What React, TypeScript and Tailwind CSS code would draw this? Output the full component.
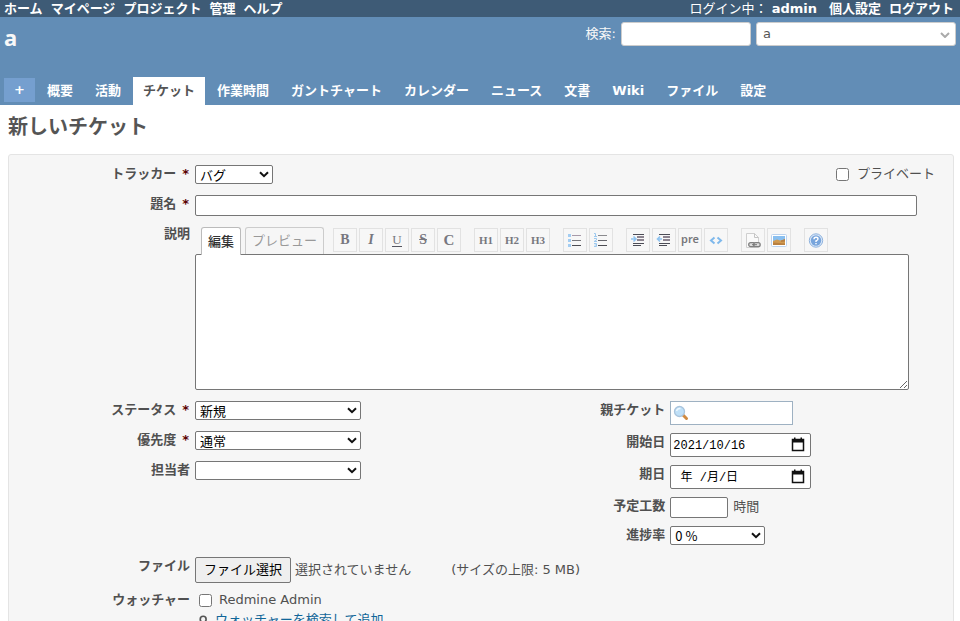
import { useRef } from "react";
import type { ReactNode } from "react";

const TOP_LINKS = ["ホーム", "マイページ", "プロジェクト", "管理", "ヘルプ"];
const TABS = ["概要", "活動", "チケット", "作業時間", "ガントチャート", "カレンダー", "ニュース", "文書", "Wiki", "ファイル", "設定"];

const INPUT = "rounded-[2px] border border-[#767676] bg-white px-[2px] text-[13px] text-black";

function Label({ htmlFor, required, children }: { htmlFor: string; required?: boolean; children: ReactNode }) {
  return (
    <label htmlFor={htmlFor} className="w-[175px] shrink-0 text-right font-bold leading-[18px]">
      {children}
      {required && <span className="ml-[6px] mr-px text-[#5a0000]">*</span>}
    </label>
  );
}

function Row({ id, label, required, children }: { id: string; label: string; required?: boolean; children: ReactNode }) {
  return (
    <div className="flex items-start gap-[5px]">
      <Label htmlFor={id} required={required}>{label}</Label>
      {children}
    </div>
  );
}

function Select({ id, width, options }: { id: string; width: string; options: string[] }) {
  return (
    <div className={`relative ${width}`}>
      <select
        id={id}
        className="block h-[19px] w-full appearance-none rounded-[2px] border border-[#767676] bg-white pl-1 text-[13px] leading-[17px] text-black font-['Noto_Sans_CJK_JP',sans-serif]"
      >
        {options.map((o) => <option key={o}>{o}</option>)}
      </select>
      <svg viewBox="0 0 10 7" className="pointer-events-none absolute right-1 top-[6px] h-[7px] w-[10px]" fill="none" aria-hidden="true">
        <path d="M1 1.200l4 4l4-4" stroke="#111" strokeWidth="2" />
      </svg>
    </div>
  );
}

function Glyph({ children, className = "" }: { children: ReactNode; className?: string }) {
  return <span className={`font-['Liberation_Serif',serif] font-bold text-[#77777f] ${className}`}>{children}</span>;
}

function Svg({ children }: { children: ReactNode }) {
  return <svg viewBox="0 0 16 16" className="size-4" fill="none" aria-hidden="true">{children}</svg>;
}

const H = "text-[11px]";
const GROUPS: { name: string; icon: ReactNode }[][] = [
  [
    { name: "太字", icon: <Glyph className="text-[14px]">B</Glyph> },
    { name: "斜体", icon: <Glyph className="text-[14px] italic">I</Glyph> },
    { name: "下線", icon: <Glyph className="border-b border-[#55555f] text-[13px] font-normal leading-[13px]">U</Glyph> },
    { name: "取り消し線", icon: <Glyph className="text-[14px] line-through">S</Glyph> },
    { name: "コード", icon: <Glyph className="text-[15px]">C</Glyph> },
  ],
  [
    { name: "見出し1", icon: <Glyph className={H}>H1</Glyph> },
    { name: "見出し2", icon: <Glyph className={H}>H2</Glyph> },
    { name: "見出し3", icon: <Glyph className={H}>H3</Glyph> },
  ],
  [
    {
      name: "箇条書き",
      icon: (
        <Svg>
          <path d="M1 2h3v3H1zM1 7h3v3H1zM1 12h3v3H1z" fill="#a3cdf2" />
          <path d="M5 3.500h9" stroke="#a79aa9" />
          <path d="M5 8.500h9" stroke="#77777c" />
          <path d="M5 13.500h9" stroke="#4c4c52" />
        </Svg>
      ),
    },
    {
      name: "番号付きリスト",
      icon: (
        <Svg>
          <path d="M1 1.500h1.500v3M1 4.500h3M1 6.500h2.500v1.500L1 9.500h3M1 11.500h2.500v3H1M1.500 13h2" stroke="#9dc9ef" />
          <path d="M5 3.500h9" stroke="#8a8a8e" />
          <path d="M5 8.500h9" stroke="#66666c" />
          <path d="M5 13.500h9" stroke="#4c4c52" />
        </Svg>
      ),
    },
  ],
  [
    {
      name: "引用",
      icon: (
        <Svg>
          <path d="M3 2.500h11M3 11.500h11M3 13.500h8" stroke="#4c4c56" />
          <path d="M7 5h7M7 8h7" stroke="#8c8490" strokeWidth="2" />
          <path d="M1 7h4M3.500 4.500L6 7L3.500 9.500" stroke="#8fc3f0" strokeWidth="1.600" />
        </Svg>
      ),
    },
    {
      name: "引用解除",
      icon: (
        <Svg>
          <path d="M3 2.500h11M3 11.500h11M3 13.500h8" stroke="#4c4c56" />
          <path d="M7 5h7M7 8h7" stroke="#8c8490" strokeWidth="2" />
          <path d="M6 7H2M4 4.500L1.500 7L4 9.500" stroke="#8fc3f0" strokeWidth="1.600" />
        </Svg>
      ),
    },
    { name: "整形済みテキスト", icon: <span className="pb-[3px] font-['Noto_Sans',sans-serif] text-[11px] font-semibold text-[#77777c]">pre</span> },
    {
      name: "コードブロック",
      icon: (
        <Svg>
          <path d="M6.500 5.500L3 8.500l3.500 3M9.500 5.500l3.500 3l-3.500 3" stroke="#7fb9ec" strokeWidth="2" />
        </Svg>
      ),
    },
  ],
  [
    {
      name: "Wikiページへのリンク",
      icon: (
        <Svg>
          <path d="M1.500 1.500h8l4 4v10h-12z" fill="#fafafa" stroke="#cfcfcf" />
          <path d="M9.500 1.500v4h4" stroke="#c4c4c4" />
          <rect x="3.700" y="10.700" width="6.500" height="4" rx="2" fill="#ddd" stroke="#808080" strokeWidth="1.300" />
          <rect x="8.700" y="10.700" width="6.500" height="4" rx="2" fill="#ddd" stroke="#808080" strokeWidth="1.300" />
          <path d="M7 12.700h5" stroke="#777" />
        </Svg>
      ),
    },
    {
      name: "画像",
      icon: (
        <Svg>
          <rect x="0.500" y="2.500" width="15" height="12" rx="1" fill="#fff" stroke="#bcd3ee" />
          <rect x="2" y="4" width="12" height="9" fill="#88bff0" />
          <path d="M2 9l4-1.500 3 1 5-1V13H2z" fill="#d19a50" />
          <path d="M10 8.500l4-1.500V9.500l-4 .5zM2 10.500l12 1V13H2z" fill="#b98040" />
        </Svg>
      ),
    },
  ],
  [
    {
      name: "ヘルプ",
      icon: (
        <Svg>
          <circle cx="8" cy="8.500" r="6.700" fill="#dce9f8" stroke="#8eb2de" />
          <circle cx="8" cy="8.500" r="5.200" fill="#78a5dc" />
          <path d="M6 7.200q0-2 2-2t2 1.700q0 1-2 2v1M8 11v1.300" stroke="#fff" strokeWidth="1.400" />
        </Svg>
      ),
    },
  ],
];

function Toolbar() {
  return (
    <div className="ml-[9px] flex gap-[13px] pt-px">
      {GROUPS.map((group, i) => (
        <div key={i} className="flex gap-[2px]">
          {group.map((b) => (
            <button key={b.name} type="button" aria-label={b.name} title={b.name} className="flex size-6 items-center justify-center border border-[#e2e2e2] bg-[#f7f7f7] leading-none">
              {b.icon}
            </button>
          ))}
        </div>
      ))}
    </div>
  );
}

function DateField({ id, value, placeholder }: { id: string; value?: string; placeholder?: string }) {
  return (
    <div className="flex h-6 w-[141px] items-center rounded-[2px] border border-[#767676] bg-white pl-[2px] pr-[5px]">
      <input
        id={id}
        type="text"
        defaultValue={value}
        placeholder={placeholder}
        className="min-w-0 flex-1 pt-[2px] text-[12px] text-black outline-none placeholder:text-black font-['Liberation_Mono','Noto_Sans_CJK_JP',monospace]"
      />
      <button type="button" aria-label="カレンダーを開く" className="pb-px">
        <svg viewBox="0 0 14 15" className="block h-[15px] w-[14px]" fill="none" aria-hidden="true">
          <path d="M1.500 2.500h11v11h-11z" stroke="#111" strokeWidth="1.500" />
          <path d="M1 2h12v3.500H1zM3 .5h1.500V3H3zM9.500.5H11V3H9.500z" fill="#111" />
        </svg>
      </button>
    </div>
  );
}

function FilePicker() {
  const ref = useRef<HTMLInputElement>(null);
  return (
    <div className="flex items-center">
      <input ref={ref} id="file" type="file" tabIndex={-1} className="hidden" />
      <button type="button" onClick={() => ref.current?.click()} className="h-[26px] w-24 rounded-[2px] border border-[#767676] bg-[#efefef] text-[13px] text-black">
        ファイル選択
      </button>
      <span className="ml-1">選択されていません</span>
      <span className="ml-10">(サイズの上限: 5 MB)</span>
    </div>
  );
}

export default function App() {
  return (
    <div className="h-screen overflow-hidden bg-white text-[13px] leading-[16px] text-[#505050] font-['DejaVu_Sans','Noto_Sans_CJK_JP',sans-serif]">
      <nav className="flex h-[17px] items-end justify-between bg-[#3e5b76] pl-1 pr-[6px] font-bold text-white">
        <div className="flex gap-2">
          {TOP_LINKS.map((t) => <a key={t} href="#">{t}</a>)}
        </div>
        <div className="flex">
          <span className="font-normal">ログイン中：</span>
          <a href="#" className="ml-1">admin</a>
          <a href="#" className="ml-3">個人設定</a>
          <a href="#" className="ml-2">ログアウト</a>
        </div>
      </nav>

      <header className="flex h-[88px] flex-col justify-between bg-[#628db6] pl-1 pr-1 text-[#f8f8f8]">
        <div className="flex items-start justify-between pt-[5px]">
          <h1 className="pt-[3px] text-[22px] font-bold leading-6 font-['Noto_Sans','Noto_Sans_CJK_JP',sans-serif]">a</h1>
          <div className="flex items-center gap-[5px]">
            <label htmlFor="q">検索:</label>
            <input id="q" type="text" className="h-6 w-[130px] rounded-[3px] border border-[#ccc] bg-white px-1 text-black" />
            <div className="relative">
              <select aria-label="プロジェクト" className="block h-6 w-[200px] appearance-none rounded-[3px] border border-[#ccc] bg-white pl-[6px] text-[#555]">
                <option>a</option>
              </select>
              <svg viewBox="0 0 10 6" className="pointer-events-none absolute right-[6px] top-[10px] h-[6px] w-[10px]" fill="none" aria-hidden="true">
                <path d="M1 1l4 4l4-4" stroke="#aaa" strokeWidth="2" />
              </svg>
            </div>
          </div>
        </div>
        <nav className="flex items-end gap-[2px] font-bold text-white">
          <button type="button" aria-label="新規作成" className="mb-[3px] h-6 w-[31px] bg-[#759fcf]">+</button>
          {TABS.map((t) => (
            <a key={t} href="#" className={t === "チケット" ? "h-7 bg-white px-[10px] pt-[6px] text-[#555]" : "h-7 px-[10px] pt-[6px]"}>{t}</a>
          ))}
        </nav>
      </header>

      <main className="pl-2 pr-[6px] pt-[9px]">
        <h2 className="text-[20px] font-bold leading-[26px] text-[#555]">新しいチケット</h2>

        <form className="mt-[14px] rounded-[3px] border border-[#e4e4e4] bg-[#f6f6f6] px-[6px] pb-10 pt-[10px]">
          <div className="flex h-[30px] justify-between pr-3">
            <Row id="tracker" label="トラッカー" required>
              <Select id="tracker" width="w-[78px]" options={["バグ"]} />
            </Row>
            <label className="flex h-[18px] items-center gap-2">
              <input type="checkbox" className="size-[13px]" />プライベート
            </label>
          </div>

          <div className="flex h-[30px] gap-[5px] pr-[30px]">
            <Label htmlFor="subject" required>題名</Label>
            <input id="subject" type="text" className={`${INPUT} h-[21px] min-w-0 flex-1`} />
          </div>

          <div className="flex gap-[5px] pr-[38px]">
            <Label htmlFor="description">説明</Label>
            <div className="min-w-0 flex-1 pt-[2px]">
              <div className="flex pl-[6px]">
                <button type="button" className="relative -mb-px h-[28px] rounded-t-[3px] border border-b-0 border-[#bbb] bg-white px-[6px] font-medium text-[#333]">編集</button>
                <button type="button" className="ml-1 h-[27px] rounded-t-[3px] border border-b-0 border-[#ccc] bg-[#f6f6f6] px-[6px] text-[#999]">プレビュー</button>
                <Toolbar />
              </div>
              <textarea id="description" className="block h-[136px] w-full resize rounded-[2px] border border-[#767676] bg-white p-[2px] text-black" />
            </div>
          </div>

          <div className="mt-[11px] grid grid-cols-[51%_49%]">
            <div className="flex flex-col gap-[11px]">
              <Row id="status" label="ステータス" required>
                <Select id="status" width="w-[166px]" options={["新規"]} />
              </Row>
              <Row id="priority" label="優先度" required>
                <Select id="priority" width="w-[166px]" options={["通常"]} />
              </Row>
              <Row id="assignee" label="担当者">
                <Select id="assignee" width="w-[166px]" options={[""]} />
              </Row>
            </div>
            <div className="flex flex-col gap-2">
              <Row id="parent" label="親チケット">
                <div className="flex h-6 w-[123px] items-center border border-[#9eb1c2] bg-white pl-[2px]">
                  <svg viewBox="0 0 16 16" className="size-4 shrink-0" fill="none" aria-hidden="true">
                    <path d="M10 10l3.500 3.500" stroke="#d08a40" strokeWidth="3" strokeLinecap="round" />
                    <circle cx="6.500" cy="6.500" r="5" fill="#bfe0f8" stroke="#a9c4dc" strokeWidth="1.300" />
                    <path d="M3.500 6q1-3 4-2.500" stroke="#eef8ff" strokeWidth="1.500" />
                  </svg>
                  <input id="parent" type="text" className="min-w-0 flex-1 text-black outline-none" />
                </div>
              </Row>
              <Row id="start" label="開始日"><DateField id="start" value="2021/10/16" /></Row>
              <Row id="due" label="期日"><DateField id="due" placeholder=" 年 /月/日" /></Row>
              <Row id="hours" label="予定工数">
                <input id="hours" type="text" className={`${INPUT} h-[21px] w-[58px]`} />
                <span className="leading-[20px]">時間</span>
              </Row>
              <Row id="ratio" label="進捗率">
                <Select id="ratio" width="w-[95px]" options={["0 %"]} />
              </Row>
            </div>
          </div>

          <div className="mt-3 flex flex-col gap-2">
            <Row id="file" label="ファイル"><FilePicker /></Row>
            <Row id="watcher" label="ウォッチャー">
              <div className="pl-1">
                <label className="flex h-[18px] items-center gap-[7px]">
                  <input id="watcher" type="checkbox" className="size-[13px]" />Redmine Admin
                </label>
                <a href="#" className="mt-[3px] flex items-center gap-[6px] text-[#169]">
                  <svg viewBox="0 0 12 12" className="size-[10px]" fill="none" stroke="#555" strokeWidth="2" aria-hidden="true">
                    <circle cx="5" cy="5" r="3.500" /><path d="M7.500 7.500L11 11" />
                  </svg>
                  ウォッチャーを検索して追加
                </a>
              </div>
            </Row>
          </div>
        </form>
      </main>
    </div>
  );
}
